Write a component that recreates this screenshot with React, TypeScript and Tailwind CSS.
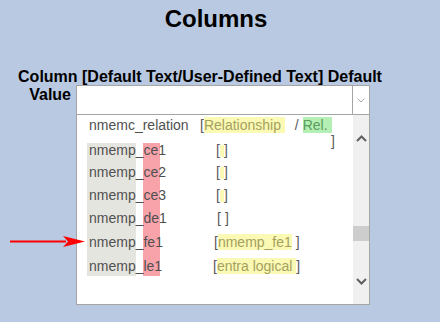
const NAME = "text-[#505050]";

// gray and red column highlights behind the name text
const COLS =
  "bg-[linear-gradient(to_right,transparent_10px,#e5e5df_10px,#e5e5df_59px,transparent_59px,transparent_66px,#f8a2aa_66px,#f8a2aa_83px,transparent_83px)]";

type Row = {
  name: string;
  h: string;
  val: React.ReactNode;
};

function Empty({ fill, ml }: { fill: boolean; ml: string }) {
  return (
    <div className={`${ml} whitespace-pre text-[#5a5a5a]`}>
      [
      <span
        className={`inline-block h-[12px] w-[4px] align-[-2px] ${fill ? "bg-[#fafab4]" : "bg-white"}`}
      />
      ]
    </div>
  );
}

const rows: Row[] = [
  { name: "nmemp_ce1", h: "h-[22px]", val: <Empty fill ml="ml-[16px]" /> },
  { name: "nmemp_ce2", h: "h-[23px]", val: <Empty fill ml="ml-[16px]" /> },
  { name: "nmemp_ce3", h: "h-[23px]", val: <Empty fill ml="ml-[16px]" /> },
  { name: "nmemp_de1", h: "h-[24px]", val: <Empty fill={false} ml="ml-[17px]" /> },
  {
    name: "nmemp_fe1",
    h: "h-[24px]",
    val: (
      <div className="ml-[14px] whitespace-pre text-[#5a5a5a]">
        [<span className="bg-[#fafab4] text-[#a6a060]">nmemp_fe1</span> ]
      </div>
    ),
  },
  {
    name: "nmemp_le1",
    h: "h-[17px]",
    val: (
      <div className="ml-[13px] whitespace-pre text-[#5a5a5a]">
        [<span className="bg-[#fafab4] text-[#a6a060]">entra logical </span>]
      </div>
    ),
  },
];

export default function App() {
  return (
    <div className="relative min-h-screen w-full bg-[#b9c9e1] font-['Liberation_Sans',Arial,sans-serif]">
      <h1 className="w-[432px] pt-[5px] text-center text-[24px] font-bold leading-[28px] text-black">
        Columns
      </h1>
      <div className="mt-[35px] w-[400px] text-center text-[16px] font-bold leading-[18px] text-black">
        Column [Default Text/User-Defined Text] Default
      </div>

      <div className="-mt-px flex items-start">
        <div className="w-[71px] pt-px text-right text-[16px] font-bold leading-[18px] text-black">
          Value
        </div>
        <div className="ml-[5px] w-[294px]">
          {/* select */}
          <div className="flex h-[30px] border border-[#a5a5a5] bg-white">
            <div className="flex-1" />
            <div className="flex w-[17px] items-center justify-center border-l border-[#a5a5a5]">
              <svg width="8" height="5" viewBox="0 0 8 5">
                <polyline
                  points="0.5,0.5 4,4 7.5,0.5"
                  fill="none"
                  stroke="#a8a8a8"
                  strokeWidth="1"
                />
              </svg>
            </div>
          </div>

          {/* list */}
          <div className="flex h-[190px] border-x border-b border-[#a5a5a5] bg-white text-[14px]">
            <div className="flex-1">
              <div className="flex h-[28px] items-start pt-[2px] leading-4">
                <div className={`w-[123px] pl-[12px] ${NAME}`}>nmemc_relation</div>
                <div className="flex flex-col">
                  <div className="whitespace-pre text-[#5a5a5a]">
                    [<span className="bg-[#fafab4] text-[#a6a060]">Relationship </span>
                    <span className="ml-[10px]">/</span>
                    <span className="ml-[4px] bg-[#b4f0b4] text-[#5c9c5c]">Rel. </span>
                  </div>
                  <div className="pl-[131px] text-[#5a5a5a]">]</div>
                </div>
              </div>

              {rows.map((r) => (
                <div key={r.name} className={`flex ${r.h} leading-[14px]`}>
                  <div className={`w-[123px] pl-[12px] ${COLS} ${NAME}`}>{r.name}</div>
                  {r.val}
                </div>
              ))}
            </div>

            {/* scrollbar */}
            <div className="flex w-[16px] flex-col items-center bg-[#f0f0f0]">
              <svg className="mt-[20px]" width="11" height="7" viewBox="0 0 11 7">
                <polyline
                  points="1,6 5.5,1.5 10,6"
                  fill="none"
                  stroke="#606060"
                  strokeWidth="2"
                />
              </svg>
              <div className="mt-[84px] h-[15px] w-full bg-[#cdcdcd]" />
              <svg className="mt-[37px]" width="11" height="7" viewBox="0 0 11 7">
                <polyline
                  points="1,1 5.5,5.5 10,1"
                  fill="none"
                  stroke="#606060"
                  strokeWidth="2"
                />
              </svg>
            </div>
          </div>
        </div>
      </div>

      {/* red annotation arrow */}
      <svg
        className="absolute left-0 top-[230px]"
        width="90"
        height="24"
        viewBox="0 0 90 24"
      >
        <line x1="10" y1="11.5" x2="66" y2="11.5" stroke="#ff0000" strokeWidth="2" />
        <polygon points="85,11.5 63,6 68,11.5 63,17" fill="#ff0000" />
      </svg>
    </div>
  );
}
